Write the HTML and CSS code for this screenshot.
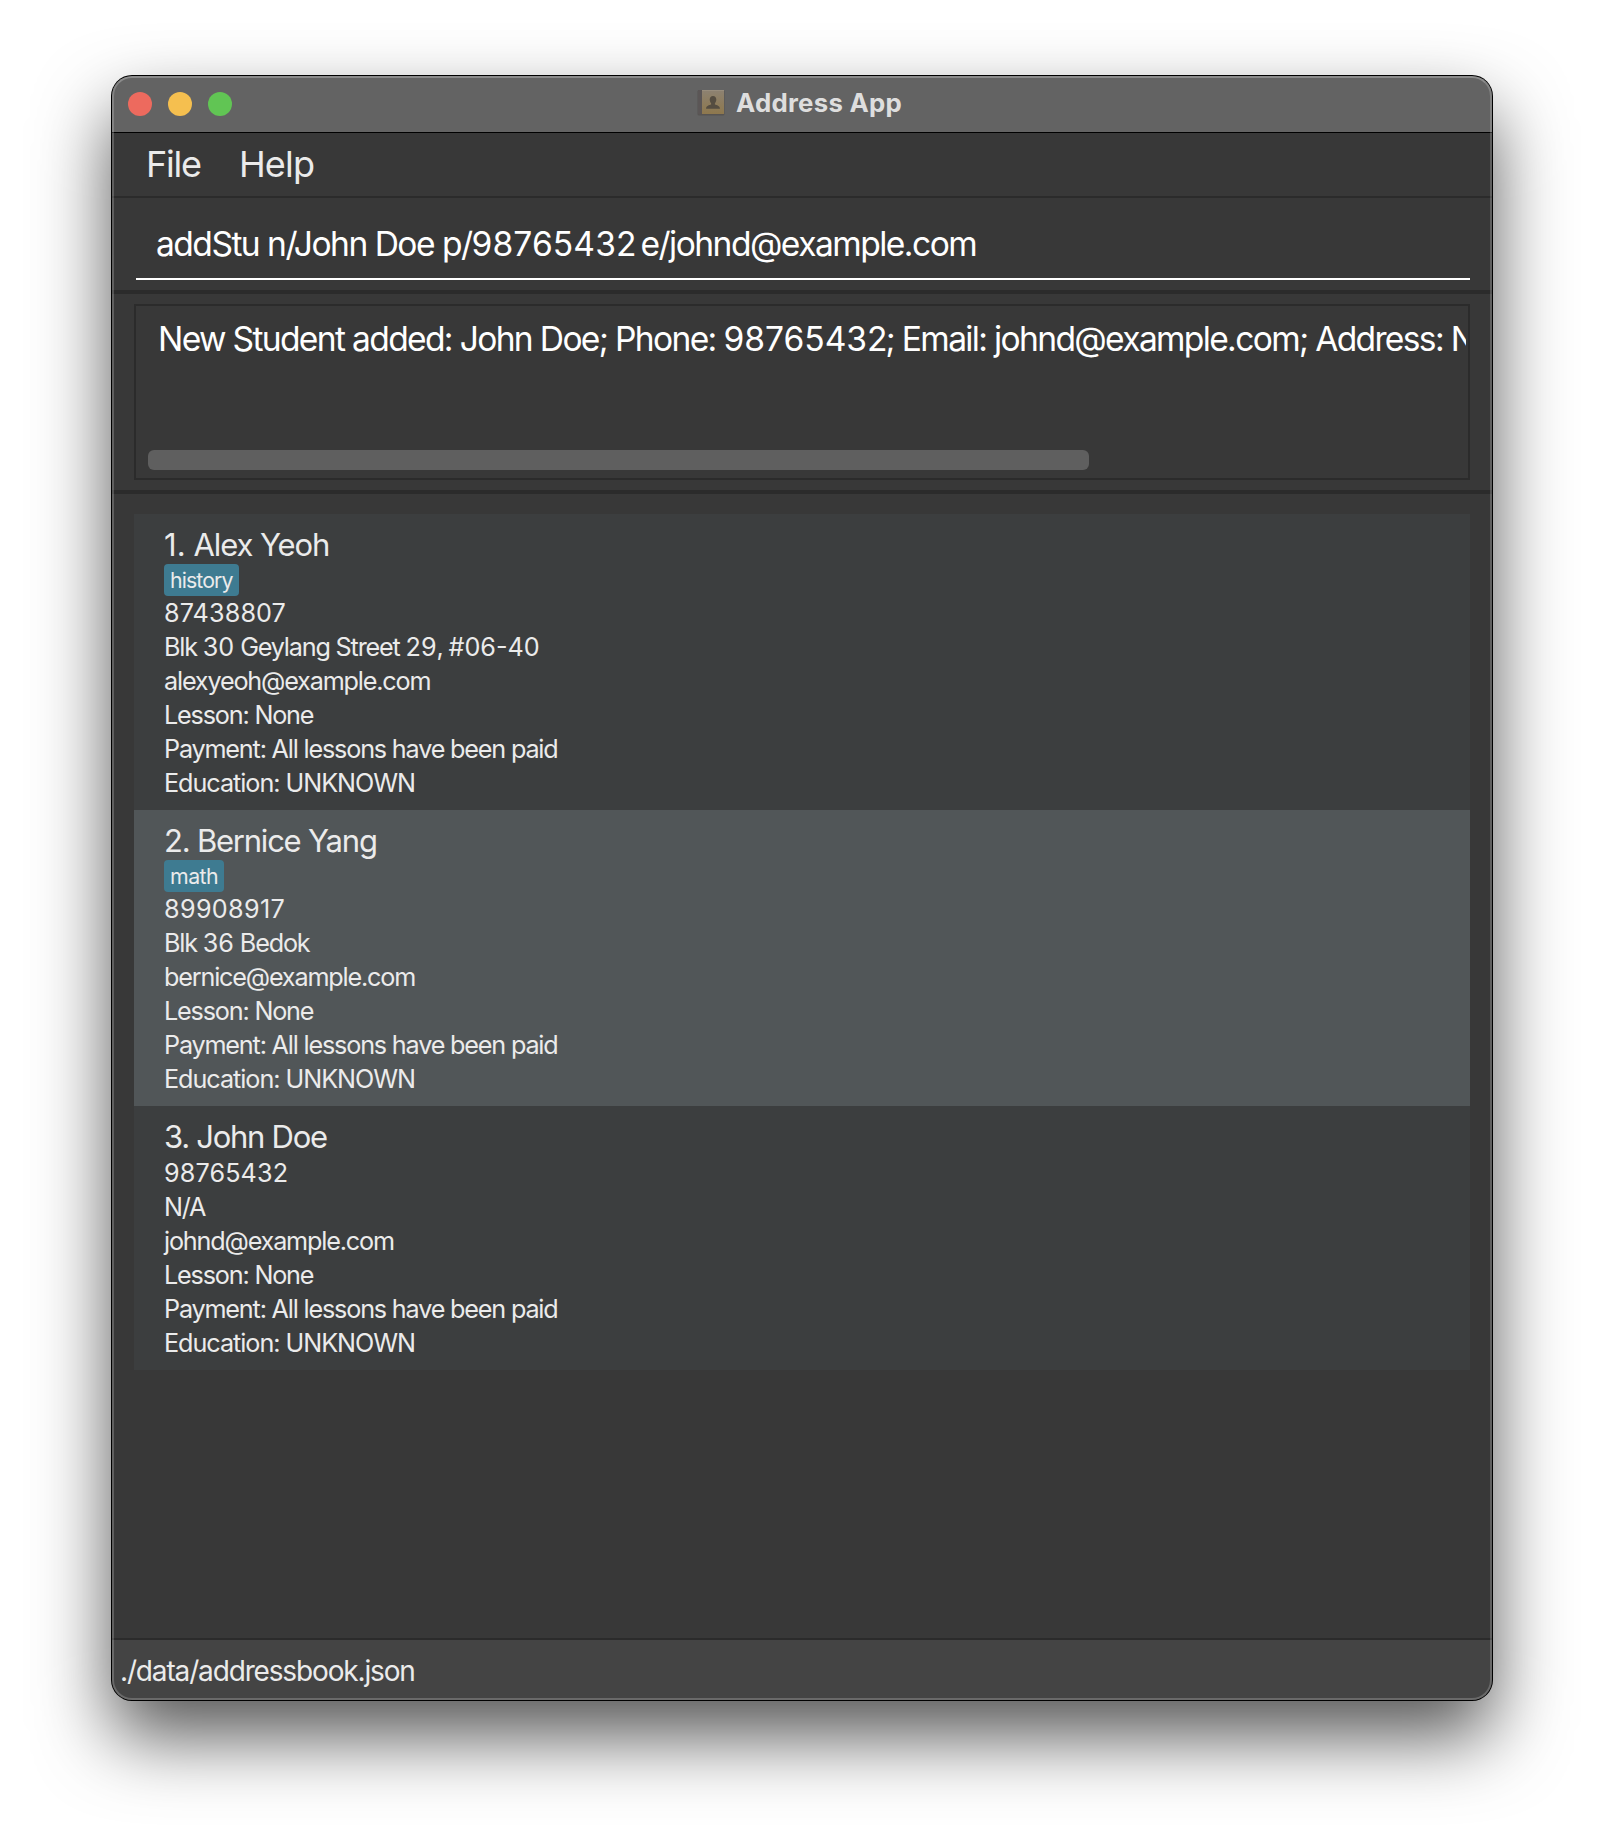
FILE: index.html
```
<!DOCTYPE html>
<html lang="en">
<head>
<meta charset="utf-8">
<title>Address App</title>
<link rel="stylesheet" href="styles.css">
</head>
<body>
<main class="window">
  <header class="titlebar">
    <div class="lights"><i class="light close"></i><i class="light minimise"></i><i class="light zoom"></i></div>
    <div class="title">
      <svg class="book" viewBox="0 0 28 27" width="28" height="27" aria-hidden="true">
        <defs>
          <linearGradient id="cover" x1="0" y1="0" x2="0" y2="1">
            <stop offset="0" stop-color="#8d8272"/><stop offset="1" stop-color="#8e784d"/>
          </linearGradient>
        </defs>
        <rect x="0.5" y="1" width="27" height="25.5" rx="1.5" fill="#575452"/>
        <rect x="1" y="1" width="4" height="24.5" rx="1" fill="#5b5656"/>
        <rect x="5" y="1" width="22" height="24" fill="url(#cover)"/>
        <rect x="5" y="1" width="22" height="1" fill="#988d7c"/>
        <path d="M16 7c2.100 0 3.300 1.500 3.300 3.600 0 1.500-.6 2.900-1.400 3.700v1.300c1.800.7 5 1.300 5 3.700v.5H9.100v-.5c0-2.400 3.200-3 5-3.700v-1.300c-.8-.8-1.400-2.200-1.400-3.700C12.700 8.500 13.900 7 16 7z" fill="#554d41"/>
      </svg>
      <span>Address App</span>
    </div>
  </header>
  <nav class="menu"><span class="menu-item file">File</span><span class="menu-item">Help</span></nav>
  <section class="command">
    <div class="command-field">addStu n/John Doe p/<span class="num">98765432</span> e/johnd@example.com</div>
  </section>
  <section class="result">
    <div class="result-box">
      <div class="result-text">New Student added: John Doe; Phone: <span class="num">98765432</span>; Email: johnd@example.com; Address: N/A</div>
      <div class="scrollbar"></div>
    </div>
  </section>
  <section class="people">
    <article class="card">
      <h2 class="name loose"><span class="one">1.</span> Alex Yeoh</h2>
      <div class="tags"><span class="tag">history</span></div>
      <p class="num">87438807</p>
      <p>Blk <span class="num">30</span> Geylang Street <span class="num">29</span>, <span class="num">#06-40</span></p>
      <p>alexyeoh@example.com</p>
      <p>Lesson: None</p>
      <p>Payment: All lessons have been paid</p>
      <p class="education">Education: UNKNOWN</p>
    </article>
    <article class="card even">
      <h2 class="name">2. Bernice Yang</h2>
      <div class="tags"><span class="tag short">math</span></div>
      <p class="num wide">89908917</p>
      <p>Blk <span class="num">36</span> Bedok</p>
      <p>bernice@example.com</p>
      <p>Lesson: None</p>
      <p>Payment: All lessons have been paid</p>
      <p class="education">Education: UNKNOWN</p>
    </article>
    <article class="card">
      <h2 class="name tight">3. John Doe</h2>
      <p class="num">98765432</p>
      <p>N/A</p>
      <p>johnd@example.com</p>
      <p>Lesson: None</p>
      <p>Payment: All lessons have been paid</p>
      <p class="education">Education: UNKNOWN</p>
    </article>
  </section>
  <footer class="status">./data/addressbook.json</footer>
</main>
</body>
</html>
```
FILE: styles.css
```
* { box-sizing: border-box; }
html { background: #fff; }
body {
  margin: 0;
  height: 1848px;
  padding: 76px 112px 148px;
  overflow: hidden;
  font-family: Inter, "Liberation Sans", sans-serif;
  color: #ebebeb;
}
.window {
  position: relative;
  display: flex;
  flex-direction: column;
  height: 1624px;
  border-radius: 20px;
  overflow: hidden;
  background: #383838;
  box-shadow: 0 0 0 1px #000, 0 36px 75px rgba(0, 0, 0, .67);
}
/* Light rim that lies over the window's edge */
.window::after {
  content: "";
  position: absolute;
  inset: 0;
  border: 2px solid rgba(255, 255, 255, .2);
  border-top-color: rgba(255, 255, 255, .26);
  border-radius: 20px;
}
.titlebar {
  display: grid;
  grid-template-columns: 1fr auto 1fr;
  align-items: center;
  height: 57px;
  padding: 0 16px;
  background: #636363;
  border-bottom: 1px solid #000;
}
.lights { display: flex; gap: 16px; }
.light { width: 24px; height: 24px; border-radius: 50%; }
.close { background: #ed6a5e; }
.minimise { background: #f5bf4f; }
.zoom { background: #61c554; }
.title {
  display: flex;
  align-items: center;
  gap: 11px;
  margin-right: 5px;
  font-size: 25.8px;
  font-weight: 700;
  letter-spacing: .25px;
  line-height: 54px;
  padding-bottom: 2px;
  color: #dedede;
}
.book { display: block; margin-bottom: 2px; }
.menu {
  display: flex;
  gap: 38px;
  height: 65px;
  padding-left: 34px;
  border-bottom: 2px solid #2b2b2b;
  font-size: 36px;
  line-height: 62px;
  letter-spacing: -.8px;
}
.file { letter-spacing: -1.2px; }
.command { height: 92px; padding: 12px 22px 10px 24px; }
.command-field {
  height: 70px;
  padding-left: 20px;
  border-bottom: 2px solid #fff;
  font-size: 33.6px;
  line-height: 67px;
  letter-spacing: -1.53px;
  white-space: nowrap;
  color: #fff;
}
.num { letter-spacing: 0; }
.command-field .num { margin-right: -4px; letter-spacing: .1px; }
.result { height: 200px; padding: 10px 22px; border-top: 4px solid #2b2b2b; }
.result-box {
  display: flex;
  flex-direction: column;
  justify-content: space-between;
  height: 176px;
  padding: 0 2px 8px 12px;
  border: 2px solid #2b2b2b;
}
.result-text {
  padding-left: 10px;
  overflow: hidden;
  white-space: nowrap;
  font-size: 33.6px;
  line-height: 66px;
  letter-spacing: -1.66px;
  color: #fff;
}
.result-text .num { margin-right: -2px; }
.scrollbar { width: 941px; height: 20px; border-radius: 6px; background: #5f5f5f; }
.people { flex: 1; padding: 20px 22px; border-top: 4px solid #2b2b2b; }
.card { padding: 10px 30px; background: #3c3e3f; font-size: 25.2px; letter-spacing: -1.18px; }
.even { background: #515658; }
.card p { margin: 0; line-height: 34px; }
.card p.num { letter-spacing: .12px; }
.card p.wide { letter-spacing: .35px; }
.card p.education { letter-spacing: -1.03px; }
.name { height: 40px; margin: 0; font-size: 31px; font-weight: 400; line-height: 42px; letter-spacing: -1.22px; }
.loose { letter-spacing: -1.1px; }
.one { letter-spacing: .2px; }
.tight { letter-spacing: -1.27px; }
.tags { display: flex; height: 32px; }
.tag {
  padding: 0 6px;
  border-radius: 4px;
  background: #3e7b91;
  font-size: 21.3px;
  line-height: 32px;
  letter-spacing: -.9px;
}
.tag.short { letter-spacing: -.5px; }
.status {
  height: 62px;
  padding-left: 8px;
  border-top: 2px solid #2b2b2b;
  background: #444;
  font-size: 28px;
  line-height: 62px;
  letter-spacing: -1.15px;
}
```
